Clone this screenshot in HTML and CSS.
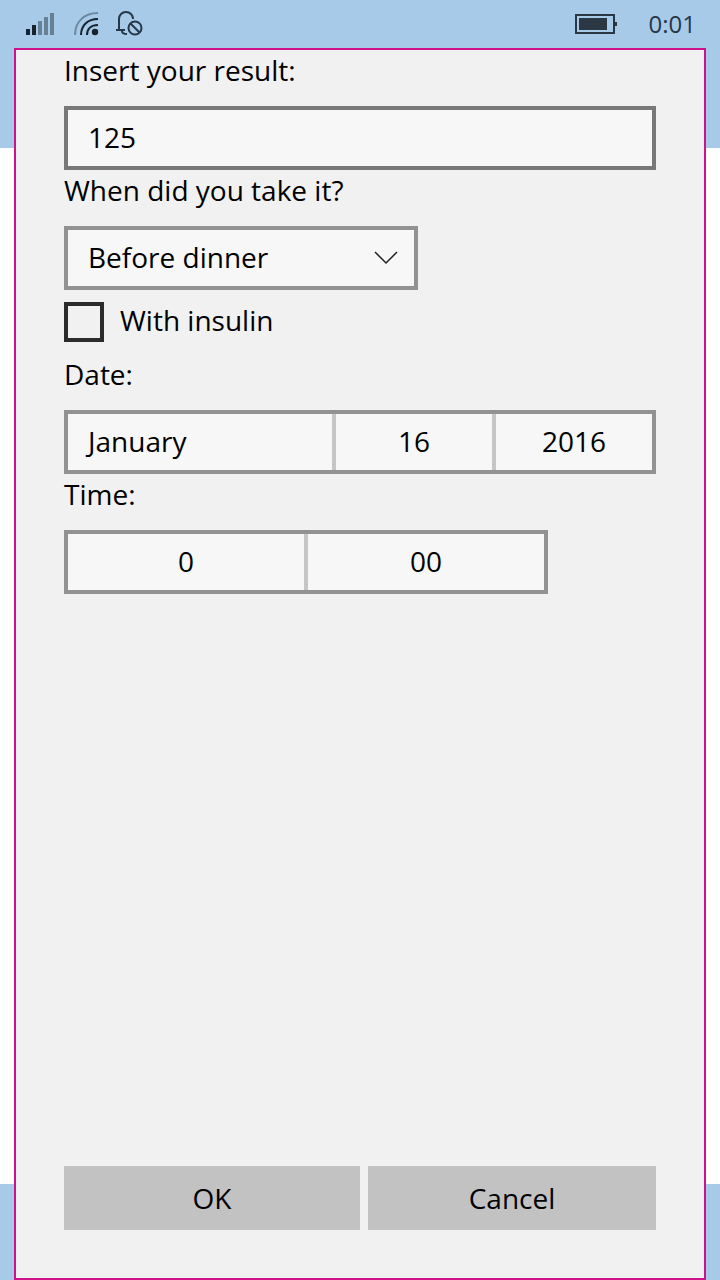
FILE: index.html
```
<!DOCTYPE html>
<html lang="en">
<head>
<meta charset="utf-8">
<meta name="viewport" content="width=device-width, initial-scale=1">
<title>Insert result</title>
<link rel="stylesheet" href="styles.css">
</head>
<body>
<div class="screen">
  <header class="status-bar">
    <div class="status-icons">
      <svg class="icon-signal" width="28" height="24" viewBox="0 0 28 24" aria-label="Signal">
        <g fill="#17222c"><rect x="0" y="17" width="4" height="6"/><rect x="6" y="13" width="4" height="10"/></g>
        <g fill="#678093"><rect x="12" y="9" width="4" height="14"/><rect x="18" y="5" width="4" height="18"/><rect x="24" y="1" width="4" height="22"/></g>
      </svg>
      <svg class="icon-wifi" width="26" height="24" viewBox="0 0 26 24" aria-label="Wi-Fi">
        <g fill="none" stroke-width="2">
          <path d="M1 23C1 10 10 1 24 1" stroke="#6d899f"/>
          <path d="M7 23C7 13.500 13.500 7 24 7" stroke="#17222c"/>
          <path d="M13 23C13 17 17 13 24 13" stroke="#17222c"/>
        </g>
        <circle cx="21" cy="20" r="3.200" fill="#17222c"/>
      </svg>
      <svg class="icon-quiet" width="28" height="26" viewBox="0 0 28 26" fill="none" stroke="#263746" stroke-width="2" aria-label="Quiet hours">
        <path d="M17 8C17 4 14 1 10 1S3 4 3 8v11M0 19h9M6 20c0 2 1 3 5 3"/>
        <circle cx="19" cy="17" r="6.500"/>
        <path d="M14.500 12.500l9 9"/>
      </svg>
    </div>
    <div class="status-info">
      <svg width="42" height="20" viewBox="0 0 42 20" aria-label="Battery">
        <rect x="1" y="1" width="38" height="18" fill="none" stroke="#2b3844" stroke-width="2"/>
        <rect x="4" y="4" width="28" height="12" fill="#2b3844"/>
        <rect x="40" y="8" width="2" height="4" fill="#2b3844"/>
      </svg>
      <time class="clock">0:01</time>
    </div>
  </header>

  <form class="dialog">
    <label class="caption" for="result">Insert your result:</label>
    <input class="field" id="result" type="text" inputmode="numeric" value="125">

    <label class="caption" for="when">When did you take it?</label>
    <div class="combo">
      <select class="field" id="when"><option>Before dinner</option></select>
      <svg class="chevron" width="24" height="14" viewBox="0 0 24 14" fill="none" stroke="#222" stroke-width="1.500" aria-hidden="true"><path d="M1 1l11 11L23 1"/></svg>
    </div>

    <label class="check"><input type="checkbox"><span>With insulin</span></label>

    <span class="caption" id="date-label">Date:</span>
    <div class="picker picker-date" role="group" aria-labelledby="date-label">
      <button class="part part-month" type="button">January</button>
      <button class="part" type="button">16</button>
      <button class="part" type="button">2016</button>
    </div>

    <span class="caption" id="time-label">Time:</span>
    <div class="picker picker-time" role="group" aria-labelledby="time-label">
      <button class="part" type="button">0</button>
      <button class="part" type="button">00</button>
    </div>

    <div class="actions">
      <button class="action" type="button">OK</button>
      <button class="action" type="button">Cancel</button>
    </div>
  </form>
</div>
</body>
</html>
```
FILE: styles.css
```
* {
  box-sizing: border-box;
}

body {
  margin: 0;
  font-family: "Open Sans", "Noto Sans", sans-serif;
  font-size: 28px;
  line-height: 40px;
  color: #000;
}

/* Blue bands of the page behind the dialog */
.screen {
  display: flex;
  flex-direction: column;
  min-height: 100vh;
  background:
    linear-gradient(#a6cae8, #a6cae8) top / 100% 148px no-repeat,
    linear-gradient(#a6cae8, #a6cae8) bottom / 100% 96px no-repeat,
    #fff;
}

.status-bar {
  display: flex;
  justify-content: space-between;
  align-items: center;
  height: 48px;
  padding: 0 24px 0 26px;
}

.status-icons,
.status-info {
  display: flex;
  align-items: center;
}

.status-icons {
  gap: 16px;
}

.icon-wifi {
  margin-left: 4px;
}

.status-info {
  gap: 32px;
}

.clock {
  font-size: 24px;
  color: #263746;
}

.dialog {
  display: flex;
  flex-direction: column;
  flex: 1;
  margin: 0 14px;
  padding: 0 48px 48px;
  background: #f1f1f1;
  border: 2px solid #d0128a;
}

.caption {
  padding-bottom: 16px;
}

.field,
.part,
.action {
  margin: 0;
  border: 0;
  border-radius: 0;
  font: inherit;
  color: inherit;
}

.field {
  appearance: none;
  width: 100%;
  height: 64px;
  padding: 0 20px 2px;
  background: #f7f7f7;
  border: 4px solid #787878;
}

.combo {
  position: relative;
  width: 354px;
  max-width: 100%;
}

.combo .field {
  display: block;
  border-color: #929292;
}

.chevron {
  position: absolute;
  top: 25px;
  right: 20px;
  pointer-events: none;
}

.check {
  display: flex;
  align-items: center;
  gap: 16px;
  margin: 12px 0;
}

.check span {
  padding-bottom: 2px;
  margin-top: -2px;
}

.check input {
  appearance: none;
  width: 40px;
  height: 40px;
  margin: 0;
  border: 4px solid #2c2c2c;
}

.check input:checked {
  background: #2c2c2c;
}

.picker {
  display: grid;
  gap: 4px;
  height: 64px;
  border: 4px solid #929292;
  background: #c6c6c6;
}

.picker-date {
  grid-template-columns: 22fr 13fr 13fr;
}

.picker-time {
  grid-template-columns: 1fr 1fr;
  width: 484px;
  max-width: 100%;
}

.part {
  padding: 0 20px 2px;
  background: #f7f7f7;
}

.part-month {
  text-align: left;
}

.actions {
  display: grid;
  grid-template-columns: 37fr 36fr;
  gap: 8px;
  margin-top: auto;
}

.action {
  height: 64px;
  background: #c2c2c2;
}
```
